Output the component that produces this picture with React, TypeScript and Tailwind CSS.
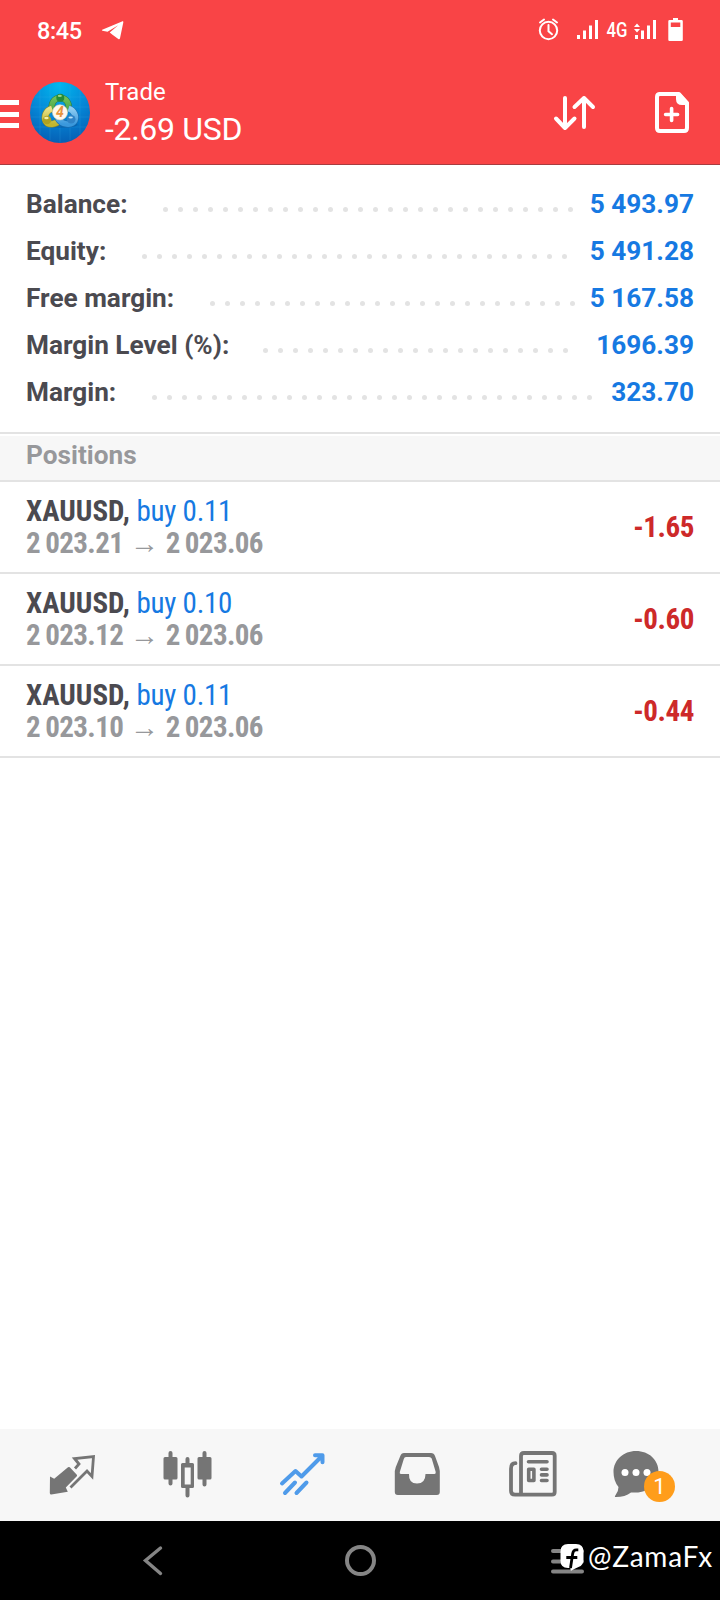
const summary = [
  { label: 'Balance:', value: '5 493.97', dots: 28, labelWidth: 'w-[137px]' },
  { label: 'Equity:', value: '5 491.28', dots: 29, labelWidth: 'w-[116px]' },
  { label: 'Free margin:', value: '5 167.58', dots: 25, labelWidth: 'w-[184px]' },
  { label: 'Margin Level (%):', value: '1696.39', dots: 21, labelWidth: 'w-[237px]' },
  { label: 'Margin:', value: '323.70', dots: 30, labelWidth: 'w-[126px]' },
];

const positions = [
  { volume: 'buy 0.11', open: '2 023.21', profit: '-1.65' },
  { volume: 'buy 0.10', open: '2 023.12', profit: '-0.60' },
  { volume: 'buy 0.11', open: '2 023.10', profit: '-0.44' },
];

function StatusBar() {
  return (
    <div className="flex h-[60px] items-start text-white">
      <span className="ml-[37px] mt-[16px] w-[46px] whitespace-nowrap text-[23.5px] font-medium leading-[30px] tracking-[-0.4px]">8:45</span>
      <svg className="ml-[18px] mt-[20px]" width="24" height="21" viewBox="0 0 24 21" fill="currentColor">
        <path d="M1.2 9.8 21 1.4c.9-.4 1.5 0 1.3 1L19 18.2c-.2 1-.9 1.3-1.7.8L11.500 14.700 8.700 12.600 17.200 5.200 6.500 11.700 1.500 10.700c-.7-.2-.8-.6-.3-.9Z" />
      </svg>
      <svg className="ml-auto mr-[34px] mt-[16px]" width="150" height="28" viewBox="536 16 150 28" fill="currentColor">
        <g fill="none" stroke="currentColor" strokeWidth="2" strokeLinecap="round">
          <circle cx="548.500" cy="30.500" r="8.700" />
          <path d="M548.500 25v6.200l3.500 3M540 22.500l4-3M557 22.500l-4-3" />
        </g>
        <path d="M577 35h3v4h-3zM583 30.500h3V39h-3zM589 25.500h3V39h-3zM595 20h3v19h-3z" />
        <text x="606.500" y="36.500" fontFamily="Roboto" fontWeight="500" fontSize="19.500" textLength="21" lengthAdjust="spacingAndGlyphs">4G</text>
        <path d="m637 23.500 3 3.500h-6zM637 32.500l-3-3.500h6zM635 35h3v4h-3zM641 30.500h3V39h-3zM647 25.500h3V39h-3zM653 20h3v19h-3z" />
        <path fillRule="evenodd" d="M673 18h5v2h3.500q1.300 0 1.300 1.300V40q0 1-1.300 1h-12q-1.200 0-1.200-1.200V21.300q0-1.300 1.300-1.300H673zM670.800 22.500V27h9.500v-4.500z" />
      </svg>
    </div>
  );
}

function AppLogo() {
  return (
    <svg width="60" height="61" viewBox="0 0 60 61">
      <defs>
        <radialGradient id="sky" cx=".48" cy=".05" r=".95">
          <stop offset="0" stopColor="#00b8ee" />
          <stop offset=".55" stopColor="#0586d6" />
          <stop offset="1" stopColor="#0560b5" />
        </radialGradient>
        <linearGradient id="green" x2="0" y2="1"><stop stopColor="#6fbf58" /><stop offset="1" stopColor="#45a545" /></linearGradient>
        <linearGradient id="yellow" x2="0" y2="1"><stop stopColor="#e9e288" /><stop offset="1" stopColor="#c3b62f" /></linearGradient>
        <linearGradient id="blue" x2="0" y2="1"><stop stopColor="#8fcdf2" /><stop offset="1" stopColor="#3a98dc" /></linearGradient>
      </defs>
      <ellipse cx="30" cy="30.500" rx="30" ry="30.500" fill="url(#sky)" />
      <path d="M10 8v44M20 3v55M30 0v61M40 3v55M50 8v44M5 15h50M1 25h58M1 35h58M3 45h54" stroke="#40b6ed" strokeWidth=".6" opacity=".3" />
      <ellipse cx="30.500" cy="42.500" rx="17" ry="3.500" fill="#04539c" opacity=".45" />
      <path d="M22 30c-1.500-9 2-14 8.200-14S40 21 38.500 30" fill="none" stroke="#2a7d45" strokeWidth="6.500" />
      <path d="M22 30c-1.500-9 2-14 8.200-14S40 21 38.500 30" fill="none" stroke="url(#green)" strokeWidth="5.300" />
      <path d="M22 26.500c-6.500 2-8 8.500-6.200 12.500 2.500 4.500 10 4 14.200-1" fill="none" stroke="#8b8c2d" strokeWidth="7" />
      <path d="M22 26.500c-6.500 2-8 8.500-6.200 12.500 2.500 4.500 10 4 14.200-1" fill="none" stroke="url(#yellow)" strokeWidth="5.800" />
      <path d="M38.500 26.500c6 2 8 8 6.300 12C42 44 31.500 43 28 36.500" fill="none" stroke="#1e6eaf" strokeWidth="6.800" />
      <path d="M38.500 26.500c6 2 8 8 6.300 12C42 44 31.500 43 28 36.500" fill="none" stroke="url(#blue)" strokeWidth="5.600" />
      <circle cx="30.300" cy="15.800" r="4" fill="#258b37" />
      <circle cx="17" cy="38" r="4.300" fill="#b0a222" />
      <circle cx="41.200" cy="37.300" r="4.300" fill="#2f83c7" />
      <ellipse cx="29.800" cy="13.900" rx="2.100" ry="1.100" fill="#9dd587" />
      <ellipse cx="16.400" cy="36" rx="2.200" ry="1.200" fill="#f2edab" />
      <ellipse cx="40.700" cy="35.500" rx="2.200" ry="1.100" fill="#b9e2f7" />
      <circle cx="30" cy="30.300" r="7.600" fill="#fff8ed" stroke="#d7d2b9" strokeWidth=".6" />
      <text x="29.800" y="35.200" textAnchor="middle" fontFamily="Roboto" fontWeight="700" fontStyle="italic" fontSize="14" fill="#e7943d">4</text>
    </svg>
  );
}

function TitleBar() {
  return (
    <div className="flex h-[104px] items-start text-white">
      <div className="mt-[40px] flex h-[28px] w-[19px] flex-col justify-between">
        <span className="h-[5px] bg-white" />
        <span className="h-[5px] bg-white" />
        <span className="h-[5px] bg-white" />
      </div>
      <div className="ml-[11px] mt-[22px]"><AppLogo /></div>
      <div className="ml-[15px] mt-[17px] flex w-[150px] flex-col whitespace-nowrap">
        <span className="text-[24px] leading-[30px] tracking-[0.1px]">Trade</span>
        <span className="mt-[3px] text-[32px] leading-[38px] tracking-[-0.3px]">-2.69 USD</span>
      </div>
      <svg className="ml-auto mt-[34px]" width="44" height="37" viewBox="0 0 44 37" fill="none" stroke="currentColor" strokeWidth="4" strokeLinecap="round" strokeLinejoin="round">
        <path d="M13 4v30M4 24.500l9 9.500 9.500-9.500M32 33V4M22.500 13 32 4l9 9" />
      </svg>
      <svg className="ml-[58px] mr-[30px] mt-[31px]" width="36" height="43" viewBox="0 0 36 43" fill="none" stroke="currentColor">
        <path d="M5 3h20l8 9v25q0 3-3 3H6q-3 0-3-3V6q0-3 3-3Z" strokeWidth="4" strokeLinejoin="round" />
        <path d="M22 2h4l8.500 9v3H28q-6 0-6-6Z" fill="currentColor" stroke="none" />
        <path d="M17.600 17.500V29.500M11.600 23.500h12" strokeWidth="3.600" strokeLinecap="round" />
      </svg>
    </div>
  );
}

function AccountSummary() {
  return (
    <section className="h-[267px] px-[26px] pt-[15px]">
      {summary.map((row) => (
        <div key={row.label} className="flex h-[47px] items-center whitespace-nowrap text-[26.200px] font-bold leading-[45px]">
          <span className={`${row.labelWidth} mt-[2px] shrink-0 text-[#4b4a50]`}>{row.label}</span>
          <span className="mt-[11px] flex gap-[10px]">
            {Array.from({ length: row.dots }, (_, i) => (
              <span key={i} className="size-[5px] rounded-full bg-[#e3e3e3]" />
            ))}
          </span>
          <span className="ml-auto mt-[2px] text-[#1679e2]">{row.value}</span>
        </div>
      ))}
    </section>
  );
}

function PositionRow({ volume, open, profit }: { volume: string; open: string; profit: string }) {
  return (
    <li className="flex h-[92px] items-center justify-between border-b-2 border-[#e3e3e3] px-[26px] font-['Roboto_Condensed',Roboto,sans-serif] font-bold [font-stretch:condensed]">
      <div className="flex flex-col whitespace-nowrap text-[29px] leading-[32px]">
        <span className="text-[#4b4a50]">XAUUSD, <span className="font-normal tracking-[-0.25px] text-[#1679e2]">{volume}</span></span>
        <span className="text-[#97989b]">
          <span className="tracking-[-0.6px] [word-spacing:-1px]">{open}</span> → <span className="tracking-[-0.6px] [word-spacing:-1px]">2 023.06</span>
        </span>
      </div>
      <span className="mt-[2px] text-[29px] tracking-[-0.4px] text-[#cd2929]">{profit}</span>
    </li>
  );
}

function TabBar() {
  return (
    <nav className="flex h-[92px] items-start bg-[#f7f7f7] text-[#757575]">
      <svg className="ml-[48px] mt-[25px]" width="49" height="42" viewBox="48 1454 49 42">
        <path d="M68 1467.200q1-.6 1.800.1l7 7.400q.6.800 0 1.500l-11 11.300 2 4.300-16.500 2.800q-1.500 0-1.500-1.500l.2-16.500 4.200 2.200z" fill="currentColor" />
        <path d="m75 1468.500 4-4.500-4.500-5.500 19-2-1.500 20-5-5.500-16.500 16.500" fill="none" stroke="currentColor" strokeWidth="2.800" />
      </svg>
      <svg className="ml-[66px] mt-[21px]" width="50" height="49" viewBox="163 1450 50 49" fill="currentColor">
        <path d="M168.500 1453q0-2 2-2t2 2v4h3.500q1.500 0 1.500 1.500v19.500q0 1.500-1.500 1.500h-3.500v4q0 2-2 2t-2-2v-4H165q-1.500 0-1.500-1.500v-19.500q0-1.500 1.500-1.500h3.500zM202.500 1453q0-2 2-2t2 2v4h3.500q1.500 0 1.500 1.500v19.500q0 1.500-1.500 1.500h-3.500v5q0 2-2 2t-2-2v-5H199q-1.500 0-1.500-1.500v-19.500q0-1.500 1.500-1.500h3.500z" />
        <path fillRule="evenodd" d="M185.500 1459q0-2 2-2t2 2v4h3q1.500 0 1.500 1.500v22q0 1.500-1.500 1.500h-3v7.500q0 2-2 2t-2-2v-7.500h-3q-1.500 0-1.500-1.500v-22q0-1.500 1.500-1.500h3zm-.8 8.500v17h6v-17z" />
      </svg>
      <svg className="ml-[66px] mt-[22px]" width="47" height="46" viewBox="279 1451 47 46" fill="none" stroke="#4f9bea" strokeWidth="4" strokeLinecap="round" strokeLinejoin="round">
        <path d="m282 1483.500 13.500-12.500 6 5.500 21-21M315 1455.300h7.500v7M295 1482.500l-10 10.500M306.500 1482.500l-10 10.500" />
      </svg>
      <svg className="ml-[68px] mt-[23px]" width="48" height="44" viewBox="394 1452 48 44">
        <path fill="currentColor" d="M404 1453h27q3 0 4 3l4 11 .8 4V1492q0 3-3 3h-39q-3 0-3-3v-21l1-4 4.500-11q1-3 3.700-3Z" />
        <path fill="#f7f7f7" d="M406 1457h23q2 0 2.700 1.600l4 13.400q.3 2-1.200 2h-9q0 9.500-8.500 9.500t-8-9.500h-8q-1.700 0-1.200-2l4-13q.5-2 2.200-2Z" />
      </svg>
      <svg className="ml-[67px] mt-[22px]" width="49" height="47" viewBox="509 1451 49 47" fill="none" stroke="currentColor" strokeLinecap="round" strokeLinejoin="round">
        <path d="M524 1453h28q2.700 0 2.700 2.700V1492q0 2.700-2.700 2.700h-37q-4 0-4-4v-22q0-5.500 4.500-5.500M521 1494v-38q0-3 3-3" strokeWidth="3.800" />
        <path d="M528.500 1461.800h18.500M541.500 1469.300h5.500M541.500 1474.900h5.500M541.500 1480.500h5.500M528.700 1469.300h5.200v11.200h-5.200z" strokeWidth="3.600" />
      </svg>
      <div className="relative ml-[55px] mt-[21px] h-[54px] w-[63px]">
        <svg width="49" height="49" viewBox="613 1450 49 49">
          <path fill="currentColor" d="M636 1451c13 0 22.500 9 22.500 20.500S649 1492.500 636 1492.500h-5q-6 4.500-15 4.500-2 0-.5-1.800 3-3.500 3-8.200-5-6-5-15c0-12 10-21 22.500-21Z" />
          <circle cx="625" cy="1472.500" r="3.500" fill="#fff" /><circle cx="636" cy="1472.500" r="3.500" fill="#fff" /><circle cx="647" cy="1472.500" r="3.500" fill="#fff" />
        </svg>
        <span className="absolute left-[31px] top-[21px] flex size-[31px] items-center justify-center rounded-full bg-[#ff9d1b] text-[22px] leading-none text-white">1</span>
      </div>
    </nav>
  );
}

function NavigationBar() {
  return (
    <footer className="relative flex h-[79px] items-start bg-black text-[#858585]">
      <svg className="ml-[142px] mt-[24px]" width="22" height="32" viewBox="0 0 22 32" fill="none" stroke="currentColor" strokeWidth="3.400" strokeLinecap="round">
        <path d="m18.500 3-15 12.500 15 13" />
      </svg>
      <svg className="ml-[180px] mt-[23px]" width="34" height="34" viewBox="0 0 34 34" fill="none" stroke="currentColor" strokeWidth="4">
        <circle cx="16.500" cy="16.500" r="13.500" />
      </svg>
      <svg className="ml-[173px] mt-[28px]" width="33" height="26" viewBox="0 0 33 26" stroke="currentColor" strokeWidth="4" strokeLinecap="round">
        <path d="M2 2h29M2 12.500h29M2 22.500h29" />
      </svg>
      <div className="absolute left-[560px] top-[22px] flex items-start text-white">
        <svg width="25" height="31" viewBox="0 0 25 31">
          <path fill="currentColor" d="M8 1h8q7.500 0 7.500 7.500v8q0 6-5 7.500-3 1-7 3.500-1 .5-1-1V25H8q-7.500 0-7.500-7.500v-9Q.5 1 8 1Z" />
          <path d="M18.300 6.800h-2q-3 0-3.600 3.600L10.500 25M6.300 14.500h11" fill="none" stroke="#000" strokeWidth="2.800" />
        </svg>
        <span className="-mt-[2px] ml-[3px] whitespace-nowrap font-['Lato',sans-serif] text-[28px] leading-[30px] tracking-[0.75px]">@ZamaFx</span>
      </div>
    </footer>
  );
}

export default function App() {
  return (
    <main className="flex h-[1600px] w-[720px] flex-col overflow-hidden bg-white font-['Roboto',sans-serif]">
      <header className="h-[165px] border-b border-[#a83c40] bg-[#f94446]">
        <StatusBar />
        <TitleBar />
      </header>
      <AccountSummary />
      <div className="flex h-[50px] flex-col border-y-2 border-[#e3e3e3] pt-[2px]">
        <h2 className="flex-1 bg-[#f7f7f7] px-[26px] text-[26.200px] font-bold leading-[38px] text-[#97989b]">Positions</h2>
      </div>
      <ul className="flex-1">
        {positions.map((p) => <PositionRow key={p.open} {...p} />)}
      </ul>
      <TabBar />
      <NavigationBar />
    </main>
  );
}
